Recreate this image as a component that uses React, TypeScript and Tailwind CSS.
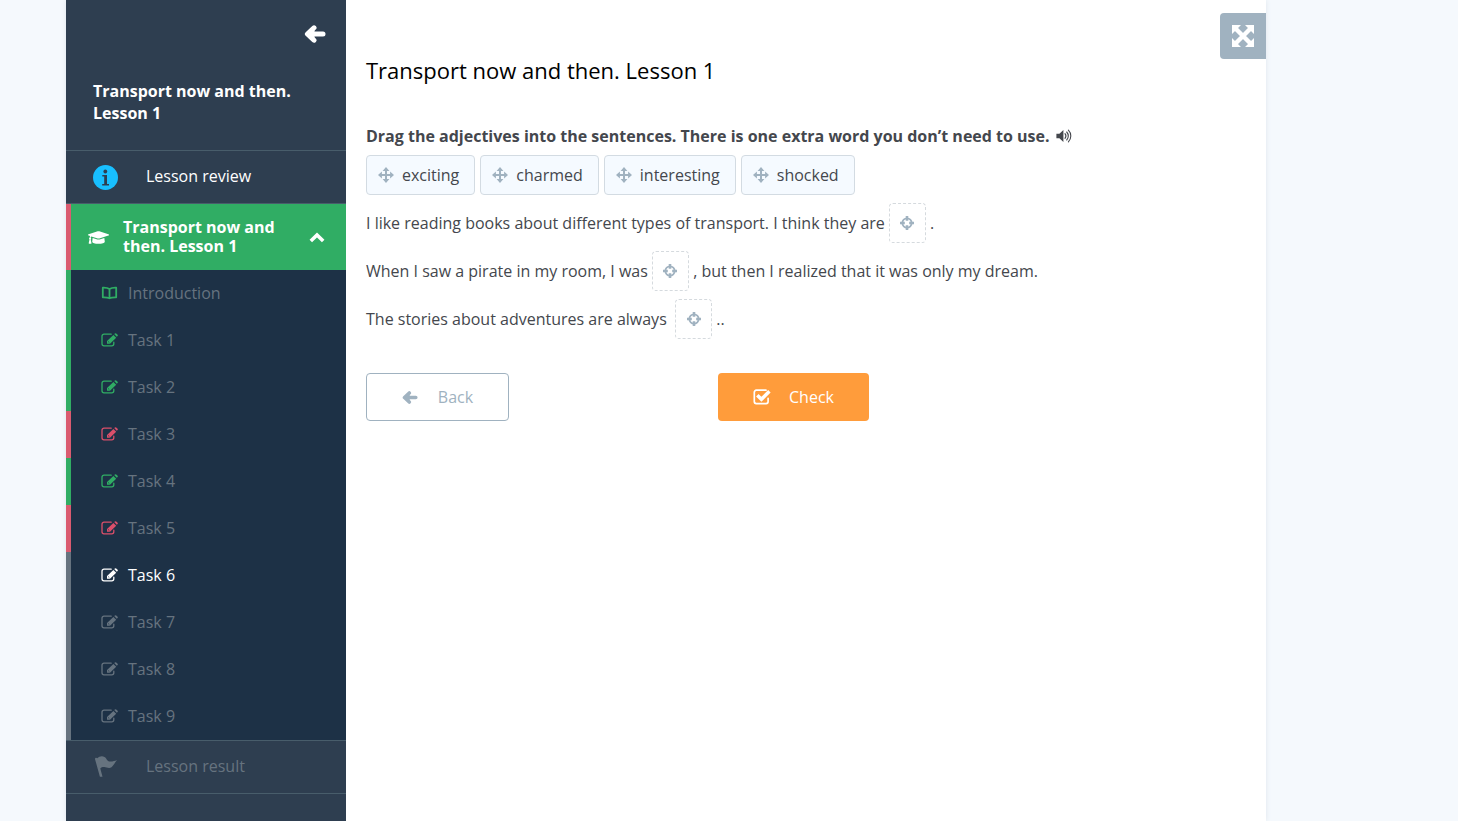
import React, { useState } from "react";
import { FaGraduationCap } from "react-icons/fa";

type Status = "done" | "failed" | "current" | "todo";

interface MenuItem {
  name: string;
  status: Status;
}

interface IconProps {
  className?: string;
}

const items: MenuItem[] = [
  { name: "Introduction", status: "done" },
  { name: "Task 1", status: "done" },
  { name: "Task 2", status: "done" },
  { name: "Task 3", status: "failed" },
  { name: "Task 4", status: "done" },
  { name: "Task 5", status: "failed" },
  { name: "Task 6", status: "current" },
  { name: "Task 7", status: "todo" },
  { name: "Task 8", status: "todo" },
  { name: "Task 9", status: "todo" },
];

const words = ["exciting", "charmed", "interesting", "shocked"];

const barColors: Record<Status, string> = {
  done: "border-[#30ad64]",
  failed: "border-[#da5b70]",
  current: "border-[#66737f]",
  todo: "border-[#66737f]",
};

const iconColors: Record<Status, string> = {
  done: "text-[#30ad64]",
  failed: "text-[#da4f6a]",
  current: "text-white",
  todo: "text-[#66737f]",
};

const ArrowLeft: React.FC<IconProps> = ({ className }) => (
  <svg viewBox="0 0 22 18" fill="none" stroke="currentColor" strokeWidth="5" strokeLinecap="round" strokeLinejoin="round" className={className} aria-hidden="true">
    <path d="M10 2.8 3.4 9l6.6 6.2M4 9h15" />
    <path d="M4 9l6-5v10z" fill="currentColor" strokeWidth="1" />
  </svg>
);

const Info: React.FC<IconProps> = ({ className }) => (
  <svg viewBox="0 0 25 25" className={className} aria-hidden="true">
    <circle cx="12.5" cy="12.5" r="12.500" fill="#18bfff" />
    <circle cx="12.300" cy="6.500" r="1.900" fill="#2e3e50" />
    <path d="M9.300 10H14v9h2v1.500H9.200V19h2v-7.500H9.300z" fill="#2e3e50" />
  </svg>
);

const ChevronUp: React.FC<IconProps> = ({ className }) => (
  <svg viewBox="0 0 16 12" fill="none" stroke="currentColor" strokeWidth="3.6" className={className} aria-hidden="true">
    <path d="M1.8 10 8 4l6.2 6" />
  </svg>
);

const Edit: React.FC<IconProps> = ({ className }) => (
  <svg viewBox="0 0 17 14" className={className} aria-hidden="true">
    <path d="M10.2 1.2H3A2 2 0 0 0 1 3.2v7.6a2 2 0 0 0 2 2h7.8a2 2 0 0 0 2-2V9.2" fill="none" stroke="currentColor" strokeWidth="1.3" strokeLinecap="round" />
    <path d="M12.4 1.9l2.800 2.800-6.200 6.100H6V7.900zM13.2 1.100l.8-.7a.9.9 0 0 1 1.200 0l1.400 1.300a.9.9 0 0 1 0 1.200l-.8.900z" fill="currentColor" />
    <path d="M7.200 8.500l1.100 1.100" stroke="#1d3146" strokeWidth=".8" />
  </svg>
);

const Book: React.FC<IconProps> = ({ className }) => (
  <svg viewBox="0 0 17 14" fill="none" stroke="currentColor" strokeWidth="1.8" strokeLinejoin="round" className={className} aria-hidden="true">
    <path d="M8.5 3.1C6.8 1.900 4.200 1.600 1.800 1.700v9.600c2.400-.1 5 .1 6.700 1 1.700-.9 4.300-1.100 6.700-1V1.700c-2.400-.1-5 .2-6.700 1.400zv9" />
  </svg>
);

const Flag: React.FC<IconProps> = ({ className }) => (
  <svg viewBox="0 0 22 21" fill="currentColor" className={className} aria-hidden="true">
    <path d="M.1 3.400C-.4 1.900 1.500 1.200 2.200 2.300 4.200.3 7-.3 9.500.9c2.500 1.400 2.300 4.200 4.900 4.500 2.400.3 4.900-.2 7.600-1.400-2.300 2.700-3.200 5.400-5.500 7.200-2.500 1.800-4.900 0-7.200-.2-1.700-.1-3 .4-4 1.400L7.500 20.800H4.900z" />
  </svg>
);

const Move: React.FC<IconProps> = ({ className }) => (
  <svg viewBox="0 0 16 16" className={className} aria-hidden="true">
    <path d="M8 2v12M2 8h12" stroke="currentColor" strokeWidth="2" />
    <path d="M8 0l3.400 3.900H4.600zM8 16l3.400-3.900H4.600zM0 8l3.900-3.400v6.800zM16 8l-3.900-3.400v6.800z" fill="currentColor" />
  </svg>
);

const Target: React.FC<IconProps> = ({ className }) => (
  <svg viewBox="0 0 16 16" fill="none" stroke="currentColor" className={className} aria-hidden="true">
    <circle cx="8" cy="8" r="4.600" strokeWidth="1.900" />
    <path d="M8 1v4.800M8 10.200V15M1 8h4.800M10.200 8H15" strokeWidth="2.600" />
  </svg>
);

const Speaker: React.FC<IconProps> = ({ className }) => (
  <svg viewBox="0 0 16 14" className={className} aria-hidden="true">
    <path d="M.4 4.800h3L7.400 1v12L3.400 9.300h-3z" fill="currentColor" />
    <path d="M9 4.700c1.100 1.300 1.100 3.300 0 4.600M10.700 3c2.100 2.200 2.100 5.800 0 8M12.400 1.200c3.200 3.200 3.200 8.400 0 11.600" fill="none" stroke="currentColor" strokeWidth="1.100" strokeLinecap="round" />
  </svg>
);

const CheckBoxIcon: React.FC<IconProps> = ({ className }) => (
  <svg viewBox="0 0 18 16" fill="none" stroke="currentColor" className={className} aria-hidden="true">
    <path d="M13 1.200H3.300a2 2 0 0 0-2 2v9.400a2 2 0 0 0 2 2h9.800a2 2 0 0 0 2-2V9.400" strokeWidth="1.700" strokeLinecap="round" />
    <path d="M4.300 6.200l4.100 4.100 8-8" strokeWidth="3.500" />
  </svg>
);

const Expand: React.FC<IconProps> = ({ className }) => (
  <svg viewBox="0 0 22 22" className={className} aria-hidden="true">
    <path d="M4 4l14 14M18 4L4 18" stroke="currentColor" strokeWidth="4.400" />
    <path d="M0 0h9L0 9zM22 0v9L13 0zM0 22v-9l9 9zM22 22h-9l9-9z" fill="currentColor" />
  </svg>
);

const DropZone: React.FC = () => (
  <span className="mb-1 inline-flex h-10 w-[37px] items-center justify-center rounded border border-dashed border-[#d5dade] align-middle">
    <Target className="h-4 w-4 text-[#a0b2c0]" />
  </span>
);

const Sidebar: React.FC = () => {
  const [open, setOpen] = useState<boolean>(true);

  return (
    <aside className="w-[280px] shrink-0 bg-[#2e3e50] text-white">
      <div className="flex h-[67px] items-center justify-end pr-5">
        <button aria-label="Hide menu">
          <ArrowLeft className="h-[18px] w-[22px]" />
        </button>
      </div>
      <h2 className="h-[83px] px-[27px] pt-[13px] text-base leading-[22px] font-bold">Transport now and then. Lesson 1</h2>

      <a href="#review" className="flex h-[54px] items-center border-y border-[#485d6b] pl-[27px]">
        <Info className="h-[25px] w-[25px]" />
        <span className="ml-7 pb-0.5">Lesson review</span>
      </a>

      <button
        onClick={() => setOpen(!open)}
        aria-expanded={open}
        className="flex h-[66px] w-full items-center border-l-[5px] border-[#da5b70] bg-[#30ad64] pr-[21px] pl-[17px] text-left"
      >
        <FaGraduationCap className="h-[21px] w-[21px]" />
        <span className="ml-[14px] flex-1 pr-5 leading-[19px] font-bold">Transport now and then. Lesson 1</span>
        <ChevronUp className="h-3 w-4" />
      </button>

      {open && (
        <ul className="bg-[#1d3146]">
          {items.map((item) => (
            <li key={item.name} className={`border-l-[5px] ${barColors[item.status]}`}>
              <a
                href="#task"
                className={`flex h-[47px] items-center pb-0.5 pl-[30px] ${item.status === "current" ? "text-white" : "text-[#66737f]"}`}
              >
                {item.name === "Introduction" ? (
                  <Book className={`h-[14px] w-[17px] ${iconColors[item.status]}`} />
                ) : (
                  <Edit className={`h-[14px] w-[17px] ${iconColors[item.status]}`} />
                )}
                <span className="ml-[10px]">{item.name}</span>
              </a>
            </li>
          ))}
        </ul>
      )}

      <a href="#result" className="flex h-[54px] items-center border-y border-[#485d6b] pb-0.5 pl-[29px] text-[#66737f]">
        <Flag className="h-[21px] w-[22px]" />
        <span className="ml-[29px]">Lesson result</span>
      </a>
    </aside>
  );
};

const App: React.FC = () => {
  return (
    <div className="min-h-screen bg-[#f5f9fd] pl-[66px] font-['Open_Sans',sans-serif] text-base">
      <div className="flex min-h-screen max-w-[1200px] bg-white shadow-[0_0_5px_#dfe6ec]">
        <Sidebar />

        <main className="min-w-0 flex-1 pl-5 text-[#44474d]">
          <div className="flex items-start justify-between pt-[13px]">
            <h1 className="pt-[41px] text-[22px] leading-8 text-black">Transport now and then. Lesson 1</h1>
            <button aria-label="Full screen" className="flex h-[46px] w-[46px] items-center justify-center rounded-l bg-[#a0b2c0] text-white">
              <Expand className="h-[22px] w-[22px]" />
            </button>
          </div>

          <div className="mt-[38px] flex items-center gap-1.5 leading-6 font-bold">
            <p>Drag the adjectives into the sentences. There is one extra word you don’t need to use.</p>
            <button aria-label="Listen">
              <Speaker className="h-[14px] w-4" />
            </button>
          </div>

          <div className="mt-[7px] flex flex-wrap gap-[5px]">
            {words.map((word) => (
              <button key={word} draggable className="flex h-10 items-center gap-2 rounded border border-[#d3dbe2] bg-[#f5faff] pr-[15px] pl-[11px]">
                <Move className="h-4 w-4 text-[#a0b2c0]" />
                {word}
              </button>
            ))}
          </div>

          <div className="mt-1 leading-[48px]">
            <p>I like reading books about different types of transport. I think they are <DropZone /> .</p>
            <p>When I saw a pirate in my room, I was <DropZone /> , but then I realized that it was only my dream.</p>
            <p>The stories about adventures are always&nbsp; <DropZone /> ..</p>
          </div>

          <div className="mt-[30px] flex max-w-[503px] justify-between">
            <button className="flex h-12 w-[143px] items-center justify-center gap-5 rounded border border-[#a0b2c0] text-[#a0b2c0]">
              <ArrowLeft className="h-[13px] w-4" />
              Back
            </button>
            <button className="flex h-12 w-[151px] items-center justify-center gap-[18px] rounded bg-[#ff9c3b] text-white">
              <CheckBoxIcon className="h-4 w-[18px]" />
              Check
            </button>
          </div>
        </main>
      </div>
    </div>
  );
};

export default App;
